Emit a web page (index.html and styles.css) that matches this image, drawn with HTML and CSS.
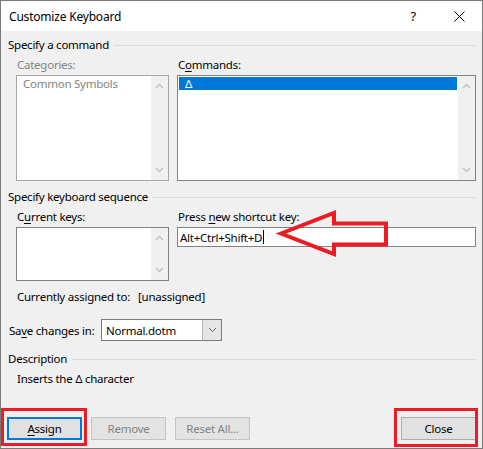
FILE: index.html
```html
<!DOCTYPE html>
<html>
<head>
<meta charset="utf-8">
<title>Customize Keyboard</title>
<link rel="stylesheet" href="styles.css">
</head>
<body>
<div class="window">
  <div class="titlebar">
    <span class="title">Customize Keyboard</span>
    <span class="help">?</span>
    <svg class="xicon" width="11" height="11" viewBox="0 0 11 11"><path d="M0.5 0.5L10.5 10.5M10.5 0.5L0.5 10.5" stroke="#000" stroke-width="1" fill="none"/></svg>
  </div>
  <div class="content">
    <div class="group-head"><span>Specify a command</span><i class="rule"></i></div>
    <div class="pair">
      <div class="col col-left">
        <div class="label disabled">Categories:</div>
        <div class="box list-box box-disabled">
          <div class="items"><div class="item muted">Common Symbols</div></div>
          <div class="vscroll">
            <svg width="9" height="6" viewBox="0 0 9 6"><polyline points="1,5 4.5,1.5 8,5" class="chev"/></svg>
            <svg width="9" height="6" viewBox="0 0 9 6"><polyline points="1,1 4.5,4.5 8,1" class="chev"/></svg>
          </div>
        </div>
      </div>
      <div class="col col-right">
        <div class="label">C<u>o</u>mmands:</div>
        <div class="box list-box">
          <div class="items"><div class="item selected">Δ</div></div>
          <div class="vscroll">
            <svg width="9" height="6" viewBox="0 0 9 6"><polyline points="1,5 4.5,1.5 8,5" class="chev"/></svg>
            <svg width="9" height="6" viewBox="0 0 9 6"><polyline points="1,1 4.5,4.5 8,1" class="chev"/></svg>
          </div>
        </div>
      </div>
    </div>

    <div class="group-head gap8"><span>Specify keyboard sequence</span><i class="rule"></i></div>
    <div class="pair">
      <div class="col col-left">
        <div class="label">C<u>u</u>rrent keys:</div>
        <div class="box keys-box">
          <div class="items"></div>
          <div class="vscroll">
            <svg width="9" height="6" viewBox="0 0 9 6"><polyline points="1,5 4.5,1.5 8,5" class="chev"/></svg>
            <svg width="9" height="6" viewBox="0 0 9 6"><polyline points="1,1 4.5,4.5 8,1" class="chev"/></svg>
          </div>
        </div>
      </div>
      <div class="col col-right">
        <div class="label">Press <u>n</u>ew shortcut key:</div>
        <div class="box input-box"><span>Alt+Ctrl+Shift+D</span><i class="caret"></i></div>
      </div>
    </div>

    <div class="assigned"><span class="assigned-label">Currently assigned to:</span><span>[unassigned]</span></div>

    <div class="save-row">
      <span class="save-label">Sa<u>v</u>e changes in:</span>
      <div class="combo">
        <span class="combo-text">Normal.dotm</span>
        <span class="combo-btn"><svg width="9" height="6" viewBox="0 0 9 6"><polyline points="1,1 4.5,4.5 8,1" class="chev-dark"/></svg></span>
      </div>
    </div>

    <div class="group-head gap10"><span>Description</span><i class="rule"></i></div>
    <div class="desc">Inserts the Δ character</div>

    <div class="buttons">
      <button class="btn btn-default"><u>A</u>ssign</button>
      <button class="btn btn-disabled">Remove</button>
      <button class="btn btn-disabled">Reset All...</button>
      <span class="spacer"></span>
      <button class="btn">Close</button>
    </div>
  </div>

  <div class="mark mark-assign"></div>
  <div class="mark mark-close"></div>
  <svg class="arrow" width="483" height="449" viewBox="0 0 483 449">
    <polygon points="281,233.5 334,213 334,223.5 386,223.5 386,244.5 334,244.5 334,254" fill="none" stroke="#ed1c24" stroke-width="4" stroke-linejoin="miter"/>
  </svg>
</div>
</body>
</html>
```

FILE: styles.css
```css
* { box-sizing: border-box; }
html, body { margin: 0; padding: 0; }
body {
  width: 483px;
  height: 449px;
  overflow: hidden;
  font-family: "Noto Sans", "Segoe UI", sans-serif;
  font-size: 11.5px;
  letter-spacing: -0.25px;
  color: #000;
  background: #fff;
  white-space: nowrap;
}
u { text-decoration: underline; text-underline-offset: 2px; }

.window {
  position: relative;
  width: 483px;
  height: 449px;
  border: 1px solid #7a7a7a;
  background: #f0f0f0;
  display: flex;
  flex-direction: column;
}

.titlebar {
  height: 30px;
  background: #fff;
  display: flex;
  align-items: center;
  padding-left: 8px;
}
.title { flex: 1; font-size: 12px; letter-spacing: -0.2px; }
.help { font-size: 13px; margin-right: 38px; }
.xicon { margin-right: 17px; }

.content {
  padding: 6px 6px 0 7px;
  display: flex;
  flex-direction: column;
}

.group-head {
  height: 16px;
  line-height: 16px;
  display: flex;
  align-items: center;
  gap: 5px;
}
.group-head .rule {
  flex: 1;
  height: 1px;
  background: #dcdcdc;
}
.gap8 { margin-top: 8px; }
.gap10 { margin-top: 10px; }

.pair {
  display: flex;
  gap: 8px;
  padding-left: 8px;
}
.col { display: flex; flex-direction: column; }
.col-left { width: 153px; }
.col-right { flex: 1; }

.label {
  margin-top: 4px;
  height: 16px;
  line-height: 16px;
  padding-left: 1px;
}
.disabled { color: #838383; }

.box {
  margin-top: 2px;
  background: #fff;
  border: 1px solid #828282;
  display: flex;
}
.box-disabled { border-color: #a6a6a6; }
.list-box { height: 106px; }
.keys-box { height: 54px; }

.items { flex: 1; padding: 1px; }
.item {
  height: 13px;
  line-height: 13px;
  padding-left: 5px;
}
.muted { color: #838383; }
.selected { background: #0078d7; color: #fff; padding-left: 6px; }

.vscroll {
  width: 17px;
  background: #f0f0f0;
  display: flex;
  flex-direction: column;
  justify-content: space-between;
  align-items: center;
  padding: 7px 0;
}
.chev { fill: none; stroke: #c2c2c2; stroke-width: 1.5; }
.chev-dark { fill: none; stroke: #606060; stroke-width: 1; }

.input-box {
  height: 20px;
  align-items: center;
  padding-left: 2px;
}
.caret {
  width: 1px;
  height: 14px;
  background: #000;
  margin-left: 1px;
}

.assigned {
  margin-top: 8px;
  height: 16px;
  line-height: 16px;
  padding-left: 9px;
  display: flex;
}
.assigned-label { width: 121px; }

.save-row {
  margin-top: 14px;
  display: flex;
  align-items: center;
  height: 22px;
}
.save-label { width: 93px; padding-left: 1px; }
.combo {
  width: 121px;
  height: 22px;
  border: 1px solid #7a7a7a;
  background: #fff;
  display: flex;
  align-items: center;
}
.combo-text { flex: 1; padding-left: 4px; }
.combo-btn {
  width: 19px;
  height: 20px;
  background: #e5e5e5;
  border-left: 1px solid #b8b8b8;
  display: flex;
  align-items: center;
  justify-content: center;
}

.desc {
  margin-top: 4px;
  height: 16px;
  line-height: 16px;
  padding-left: 9px;
}

.buttons {
  margin-top: 30px;
  margin-left: -1px;
  display: flex;
  gap: 9px;
}
.spacer { flex: 1; }
.btn {
  width: 75px;
  height: 23px;
  font-family: inherit;
  font-size: 11.5px;
  letter-spacing: -0.25px;
  background: #e1e1e1;
  border: 1px solid #adadad;
  color: #000;
  padding: 0;
}
.btn-default { border: 2px solid #0078d7; }
.btn-disabled { color: #838383; border-color: #c4c4c4; background: #e3e3e3; }

.mark {
  position: absolute;
  border: 3px solid #ed1c24;
}
.mark-assign { left: 0; top: 407px; width: 86px; height: 38px; }
.mark-close { left: 393px; top: 407px; width: 84px; height: 39px; }
.arrow { position: absolute; left: -1px; top: -1px; pointer-events: none; }
```
